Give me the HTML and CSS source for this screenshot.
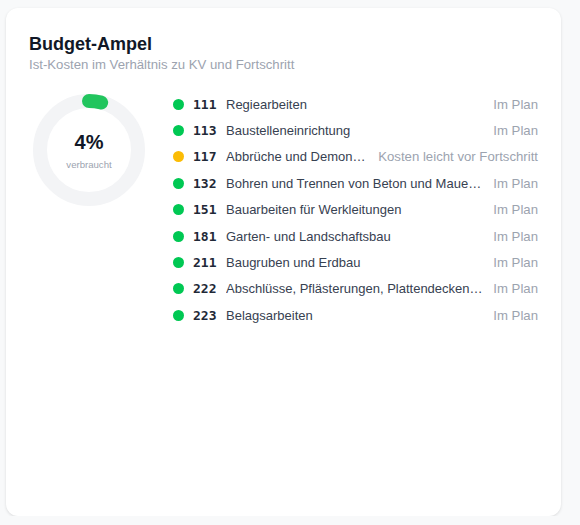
FILE: index.html
```html
<!DOCTYPE html>
<html lang="de">
<head>
    <meta charset="UTF-8">
    <meta name="viewport" content="width=device-width, initial-scale=1.0">
    <title>Budget-Ampel</title>
    <link rel="stylesheet" href="styles.css">
</head>
<body>
    <div class="card">
        <h2 class="card-title">Budget-Ampel</h2>
        <p class="card-subtitle">Ist-Kosten im Verhältnis zu KV und Fortschritt</p>

        <div class="card-body">
            <div class="donut">
                <svg width="112" height="112" viewBox="0 0 112 112">
                    <circle cx="56" cy="56" r="49" fill="none" stroke="#f3f4f6" stroke-width="14"/>
                    <!-- 4% of the circumference, starting at 12 o'clock -->
                    <circle cx="56" cy="56" r="49" fill="none" stroke="#22c55e" stroke-width="14"
                            stroke-linecap="round" stroke-dasharray="12.3 320"
                            transform="rotate(-90 56 56)"/>
                </svg>
                <div class="donut-label">
                    <span class="donut-value">4%</span>
                    <span class="donut-caption">verbraucht</span>
                </div>
            </div>

            <ul class="positions">
                <li class="position">
                    <span class="dot green"></span>
                    <span class="pos-nr">111</span>
                    <span class="pos-name">Regiearbeiten</span>
                    <span class="pos-status">Im Plan</span>
                </li>
                <li class="position">
                    <span class="dot green"></span>
                    <span class="pos-nr">113</span>
                    <span class="pos-name">Baustelleneinrichtung</span>
                    <span class="pos-status">Im Plan</span>
                </li>
                <li class="position">
                    <span class="dot yellow"></span>
                    <span class="pos-nr">117</span>
                    <span class="pos-name">Abbrüche und Demontagen</span>
                    <span class="pos-status">Kosten leicht vor Fortschritt</span>
                </li>
                <li class="position">
                    <span class="dot green"></span>
                    <span class="pos-nr">132</span>
                    <span class="pos-name">Bohren und Trennen von Beton und Mauerwerk</span>
                    <span class="pos-status">Im Plan</span>
                </li>
                <li class="position">
                    <span class="dot green"></span>
                    <span class="pos-nr">151</span>
                    <span class="pos-name">Bauarbeiten für Werkleitungen</span>
                    <span class="pos-status">Im Plan</span>
                </li>
                <li class="position">
                    <span class="dot green"></span>
                    <span class="pos-nr">181</span>
                    <span class="pos-name">Garten- und Landschaftsbau</span>
                    <span class="pos-status">Im Plan</span>
                </li>
                <li class="position">
                    <span class="dot green"></span>
                    <span class="pos-nr">211</span>
                    <span class="pos-name">Baugruben und Erdbau</span>
                    <span class="pos-status">Im Plan</span>
                </li>
                <li class="position">
                    <span class="dot green"></span>
                    <span class="pos-nr">222</span>
                    <span class="pos-name">Abschlüsse, Pflästerungen, Plattendecken, Treppen</span>
                    <span class="pos-status">Im Plan</span>
                </li>
                <li class="position">
                    <span class="dot green"></span>
                    <span class="pos-nr">223</span>
                    <span class="pos-name">Belagsarbeiten</span>
                    <span class="pos-status">Im Plan</span>
                </li>
            </ul>
        </div>
    </div>
</body>
</html>
```

FILE: styles.css
```css
body {
    margin: 0;
    padding: 8px 0 0 6px;
    font-family: "Liberation Sans", Arial, sans-serif;
    background-color: #f8f9fa;
    color: #111827;
}

.card {
    box-sizing: border-box;
    width: 555px;
    height: 508px;
    padding: 25px 23px;
    background-color: #fff;
    border-radius: 12px;
    box-shadow: 0 1px 3px rgba(0, 0, 0, 0.12);
}

.card-title {
    margin: 0;
    font-size: 18px;
    line-height: 22px;
    font-weight: bold;
    color: #111827;
}

.card-subtitle {
    margin: 2px 0 0;
    font-size: 13.2px;
    line-height: 16px;
    color: #9ca3af;
}

.card-body {
    display: flex;
    gap: 28px;
    margin-top: 18px;
}

.donut {
    position: relative;
    flex: none;
    width: 112px;
    height: 112px;
    margin-top: 3px;
    margin-left: 4px;
}

.donut svg {
    display: block;
}

.donut-label {
    position: absolute;
    inset: 0;
    display: flex;
    flex-direction: column;
    align-items: center;
    justify-content: center;
}

.donut-value {
    font-size: 20px;
    line-height: 24px;
    font-weight: bold;
    color: #111827;
}

.donut-caption {
    margin-top: 5px;
    font-size: 9.6px;
    color: #9ca3af;
}

.positions {
    flex: 1;
    min-width: 0;
    margin: 0;
    padding: 0;
    list-style: none;
}

.position {
    display: flex;
    align-items: center;
    height: 26.4px;
    font-size: 13.2px;
}

.dot {
    flex: none;
    width: 11px;
    height: 11px;
    border-radius: 50%;
    margin-right: 9px;
}

.dot.green {
    background-color: #00c853;
}

.dot.yellow {
    background-color: #fbbc05;
}

.pos-nr {
    flex: none;
    width: 33px;
    font-family: "DejaVu Sans Mono", monospace;
    font-size: 13px;
    font-weight: bold;
    color: #1f2937;
}

.pos-name {
    flex: 1;
    min-width: 0;
    overflow: hidden;
    white-space: nowrap;
    text-overflow: ellipsis;
    font-size: 13px;
    color: #374151;
}

.pos-status {
    flex: none;
    margin-left: 10px;
    white-space: nowrap;
    color: #9ca3af;
}
```
